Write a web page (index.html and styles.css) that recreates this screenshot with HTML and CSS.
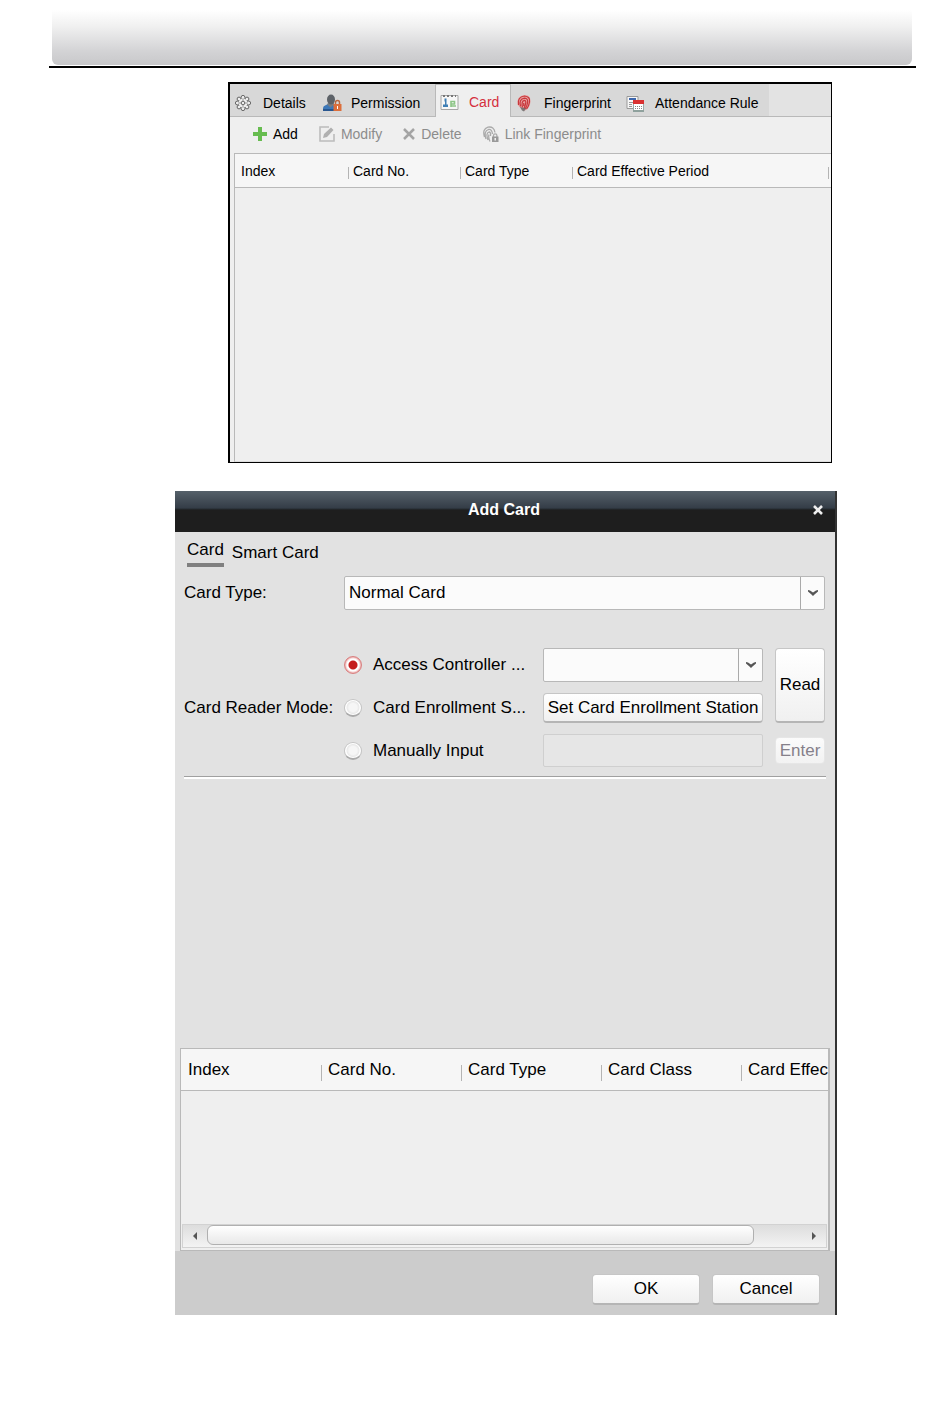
FILE: index.html
```html
<!DOCTYPE html>
<html lang="en">
<head>
<meta charset="utf-8">
<title>Add Card</title>
<link rel="stylesheet" href="styles.css">
</head>
<body>
<header class="page-header"><div class="banner"></div></header>
<main>
<section class="person-panel">
  <nav class="tabs" aria-label="Person">
    <div class="tab-list">
      <button class="tab tab-details" type="button">
        <svg class="icon" width="18" height="18" viewBox="0 0 18 18" fill="#eee" stroke="#666"><circle cx="9" cy="3.300" r="1.900"/><circle cx="13" cy="5" r="1.900"/><circle cx="14.700" cy="9" r="1.900"/><circle cx="13" cy="13" r="1.900"/><circle cx="9" cy="14.700" r="1.900"/><circle cx="5" cy="13" r="1.900"/><circle cx="3.300" cy="9" r="1.900"/><circle cx="5" cy="5" r="1.900"/><circle cx="9" cy="9" r="4.500" stroke="none"/><circle cx="9" cy="9" r="1.800"/><path d="M9 5v2M9 11v2M5 9h2M11 9h2" stroke="#999"/></svg>
        <span>Details</span></button>
      <button class="tab tab-permission" type="button">
        <svg class="icon" width="20" height="18" viewBox="0 0 20 18"><path d="M1 17v-3q0-2 3-3l2-1h6l2 2v5z" fill="#3e78b8"/><path d="M5 10.500l3.500 3 3.500-3V9H6z" fill="#777d84"/><ellipse cx="9" cy="5.500" rx="4" ry="5" fill="#5d6268"/><path d="M1 15h11v2H1z" fill="#28568f"/><path d="M13.500 11V8.500a2 2 0 0 1 4 0V11" fill="none" stroke="#b9673f" stroke-width="1.500"/><path d="M11.500 10h8v7h-8z" fill="#dc6e3b"/><path d="M15 12h1v3h-1z" fill="#fff"/></svg>
        <span>Permission</span></button>
      <button class="tab tab-card active" type="button">
        <svg class="icon" width="19" height="17" viewBox="0 0 19 17"><path d="M1 1.500h17v14H1z" fill="#f7f7f7" stroke="#a6a6a6"/><path d="M3 2h2m2 0h2m2 0h2m2 0h1" stroke="#777" stroke-width="2"/><path d="M4.500 4.500h2v3h-2zM5 7h1.500v3.500H8V13H3v-2.500h2z" fill="#3f7fb5"/><path d="M11 13V7.500h3.500V10H11m0 2h5" stroke="#8cc586" stroke-width="1.600" fill="none"/></svg>
        <span>Card</span></button>
      <button class="tab tab-finger" type="button">
        <svg class="icon" width="14" height="18" viewBox="0 0 14 18"><path d="M8 1c4 0 5.500 3 5.500 6 0 5-3 9-6 9.500-2 0-3-2-5-3.500S.5 10 .5 8C.5 4 4 1 8 1z" fill="#e8a3a3"/><g fill="none" stroke="#c8383c" stroke-width="1.200"><path d="M1.500 11Q0 3 7.500 2 13.500 2.500 12.500 8q-.5 4-3 7M3.500 12.500Q1.500 5 7.500 4.200 11.500 4.500 10.500 9q-.5 3.500-2.500 6M5.500 13.500Q4 7 7.500 6.400 9.500 7 8.500 10q-.5 2-1.500 4.500M6.700 9v3"/></g><path d="M3 13l6 1.500L7 17.500l-2-1z" fill="#666" opacity=".8"/></svg>
        <span>Fingerprint</span></button>
      <button class="tab tab-rule" type="button">
        <svg class="icon" width="18" height="17" viewBox="0 0 18 17"><path d="M1 1.500h11v12H1z" fill="#f6f6f6" stroke="#999"/><path d="M3 4h7" stroke="#3d66ad" stroke-width="2"/><path d="M3 7.500h4M3 9.500h3M3 11.500h3" stroke="#999"/><path d="M7.500 6.500h10v9h-10z" fill="#fff" stroke="#9aa"/><path d="M7 5h11v4H7z" fill="#d93131"/><path d="M9 11.500h7M9 13.500h7" stroke="#888" stroke-dasharray="1 1"/><path d="M7 15h11v2H7z" fill="#8fa19d"/></svg>
        <span>Attendance Rule</span></button>
    </div>
  </nav>
  <div class="toolbar">
    <button class="tool tool-add" type="button"><svg width="14" height="14" viewBox="0 0 14 14"><path d="M5 0h4v5h5v4H9v5H5V9H0V5h5z" fill="#67bc50"/></svg>Add</button>
    <button class="tool tool-modify" type="button" disabled><svg width="16" height="16" viewBox="0 0 16 16" fill="none" stroke="#bcbcbc" stroke-width="1.600"><path d="M10 1H1v14h14V8"/><path d="M4 12l1-4L12 1.500 14.500 4 8 11z" fill="#b0b0b0" stroke="none"/></svg>Modify</button>
    <button class="tool tool-delete" type="button" disabled><svg width="12" height="12" viewBox="0 0 12 12"><path d="M1 1l10 10M11 1L1 11" stroke="#a4a4a4" stroke-width="2.500"/></svg>Delete</button>
    <button class="tool tool-link" type="button" disabled><svg width="16" height="17" viewBox="0 0 16 17" fill="none" stroke="#aaa" stroke-width="1.300"><path d="M1.500 11Q-1 3 5 1.200 11 0 12 6.500M3 13Q.5 5 5.500 3.500 9 3 9.500 8M5 14Q2.500 7 6 6q2 0 1.500 4M7 15.500q-2-4-1-7"/><path d="M10.500 11V9.500a1.700 1.700 0 0 1 3.400 0V11"/><path d="M9 10.500h6.500V16H9z" fill="#999" stroke="none"/><path d="M12.200 12v2.500" stroke="#fff"/></svg>Link Fingerprint</button>
  </div>
  <table class="list list-small">
    <thead><tr><th class="col-first">Index</th><th class="col">Card No.</th><th class="col">Card Type</th><th>Card Effective Period</th><th class="col-end"></th></tr></thead>
  </table>
</section>

<section class="dialog" role="dialog" aria-labelledby="dialog-title">
  <div class="title-bar">
    <h1 id="dialog-title">Add Card</h1>
    <button class="close" type="button" aria-label="Close"><svg width="10" height="10" viewBox="0 0 10 10"><path d="M1 1l8 8M9 1L1 9" stroke="#eee" stroke-width="2.600"/></svg></button>
  </div>
  <div class="dialog-body">
    <nav class="modes" aria-label="Card kind"><a class="mode current" href="#card">Card</a><a class="mode" href="#smart">Smart Card</a></nav>
    <div class="type-row">
      <label for="card-type">Card Type:</label>
      <div class="select"><select id="card-type"><option>Normal Card</option></select><svg class="arrow" width="10" height="8" viewBox="0 0 10 8"><path d="M0 1l2 .5 3 2 3-2 2-.5v1.500L6.500 5.500 5 7 3.500 5.500 0 2.500z" fill="#555"/></svg></div>
    </div>
    <div class="reader" role="radiogroup" aria-labelledby="reader-label">
      <span class="reader-label" id="reader-label">Card Reader Mode:</span>
      <label class="choice"><input type="radio" name="reader" checked>Access Controller ...</label>
      <div class="select"><select aria-label="Access controller reader"><option></option></select><svg class="arrow" width="10" height="8" viewBox="0 0 10 8"><path d="M0 1l2 .5 3 2 3-2 2-.5v1.500L6.500 5.500 5 7 3.500 5.500 0 2.500z" fill="#555"/></svg></div>
      <button class="btn read" type="button">Read</button>
      <label class="choice"><input type="radio" name="reader">Card Enrollment S...</label>
      <button class="btn" type="button">Set Card Enrollment Station</button>
      <label class="choice"><input type="radio" name="reader">Manually Input</label>
      <input class="manual" type="text" aria-label="Card number" disabled>
      <button class="btn enter" type="button" disabled>Enter</button>
    </div>
    <hr class="divider">
  </div>
  <div class="card-list">
    <table class="list list-large">
      <thead><tr><th>Index</th><th>Card No.</th><th>Card Type</th><th>Card Class</th><th class="col-last">Card Effec</th></tr></thead>
    </table>
    <div class="scrollbar">
      <button class="step" type="button" aria-label="Scroll left"><svg width="4" height="8" viewBox="0 0 4 8"><path d="M4 0v8L0 4z" fill="#555"/></svg></button>
      <div class="track"><div class="thumb"></div></div>
      <button class="step" type="button" aria-label="Scroll right"><svg width="4" height="8" viewBox="0 0 4 8"><path d="M0 0v8l4-4z" fill="#555"/></svg></button>
    </div>
  </div>
  <footer class="actions"><button class="btn action" type="button">OK</button><button class="btn action" type="button">Cancel</button></footer>
</section>
</main>
</body>
</html>
```

FILE: styles.css
```css
* { box-sizing: border-box; }
body {
  margin: 0;
  background: #fff;
  color: #000;
  font: 17px/20px "Liberation Sans", Arial, sans-serif;
}
button, input, select { font: inherit; color: inherit; margin: 0; padding: 0; border: 0; background: none; border-radius: 0; }
svg { display: block; flex: none; }

.page-header { margin: 0 34px 0 49px; padding: 10px 0 1px; border-bottom: 2px solid #000; }
.banner { height: 55px; margin: 0 4px 0 3px; border-radius: 0 0 6px 6px; background: linear-gradient(#fff, #f0f0f0 30%, #d3d3d5 75%, #c8c8ca); }

.person-panel {
  display: flex;
  flex-direction: column;
  min-height: 381px;
  margin: 14px 118px 0 228px;
  border: 2px solid #000;
  border-right-width: 1px;
  border-bottom-width: 1px;
  background: #efefef;
  font-size: 14px;
  line-height: 16px;
}
.tabs { background: #e3e3e3; border-bottom: 1px solid #b9b9b9; }
.tab-list { display: inline-flex; vertical-align: top; height: 32px; background: #d8d8d8; padding-right: 10px; }
.tab { display: flex; align-items: center; padding: 6px 0 0 4px; height: 32px; white-space: nowrap; }
.tab-details { width: 87px; gap: 11px; }
.tab-permission { width: 118px; padding-left: 5px; gap: 9px; }
.tab-card { width: 76px; gap: 10px; padding-left: 4px; }
.tab-finger { width: 109px; padding-left: 6px; gap: 13px; }
.tab-rule { padding-left: 6px; gap: 11px; }
.active { height: 33px; padding-top: 2px; border: 1px solid #b9b9b9; border-bottom: 0; background: #efefef; color: #d5303e; }
.toolbar { display: flex; align-items: center; gap: 21px; height: 36px; padding: 0 0 2px 23px; }
.tool { display: flex; align-items: center; gap: 6px; white-space: nowrap; }
.tool:disabled { color: #8c8c8c; }

.list { width: 100%; border-collapse: separate; border-spacing: 0; table-layout: fixed; }
.list th {
  font-weight: normal;
  text-align: left;
  white-space: nowrap;
  background: linear-gradient(#b4b4b4, #b4b4b4) no-repeat #f6f6f6;
  border-bottom: 1px solid #b9b9b9;
}
.list th:first-child { background-image: none; }
.list-small { width: auto; margin-left: 4px; flex: 1; border: 1px solid #b9b9b9; border-bottom-color: #ddd; border-right: 0; display: block; }
.list-small thead { display: block; }
.list-small tr { display: flex; }
.list-small th { flex: 1; height: 34px; padding: 9px 0 0 5px; background-size: 1px 12px; background-position: 0 13px; }
.list-small .col-first { flex: 0 0 113px; padding-left: 6px; }
.list-small .col { flex: 0 0 112px; }
.list-small .col-end { flex: 0 0 3px; padding: 0; }

.dialog { margin: 28px 113px 0 175px; background: #e2e2e2; border-right: 2px solid #333; }
.title-bar {
  display: flex;
  align-items: center;
  height: 41px;
  padding: 0 12px 4px 20px;
  background: linear-gradient(#56616a, #343d47 17px, #252c31 18px, #1e1e1e 19px, #1e1e1e);
  color: #fff;
}
.title-bar h1 { flex: 1; margin: 0; font-size: 16px; line-height: 20px; text-align: center; }
.close { padding: 0; }
.dialog-body { padding: 8px 9px 0 9px; }
.modes { display: flex; gap: 8px; padding-left: 3px; height: 36px; }
.mode { color: #000; text-decoration: none; padding-top: 3px; }
.current { padding: 0; height: 27px; border-bottom: 4px solid #808080; }
.type-row { display: grid; grid-template-columns: 160px 1fr; align-items: center; }
.select { position: relative; }
.select select {
  display: block;
  appearance: none;
  width: 100%;
  height: 34px;
  padding-left: 4px;
  border: 1px solid #b8b8b8;
  border-radius: 2px;
  background: linear-gradient(#aaa, #aaa) no-repeat right 23px top / 1px 100% #fbfbfb;
}
.arrow { position: absolute; right: 7px; top: 13px; pointer-events: none; }
.type-row .select { margin-right: 1px; }
.reader {
  display: grid;
  grid-template-columns: 160px 199px 1fr 50px;
  grid-template-rows: 34px 30px 33px;
  row-gap: 11px;
  align-items: center;
  margin: 38px 1px 0 0;
}
.reader-label { grid-area: 1 / 1 / 4 / 2; white-space: nowrap; }
.choice { grid-column: 2; display: flex; align-items: center; gap: 11px; white-space: nowrap; }
.choice input {
  appearance: none;
  width: 18px;
  height: 18px;
  border: 1px solid #c4c4c4;
  border-bottom: 2px solid #aaa;
  border-radius: 50%;
  background: radial-gradient(circle, #f6f6f6 4px, #e9e9e9 6px, #fff 7px);
}
.choice input:checked { border: 1px solid #d98080; background: radial-gradient(circle, #c51d1d 4px, #fff 5px, #fff 6px, #eba9a9 8px); }
.btn {
  height: 30px;
  border: 1px solid #c6c6c6;
  border-bottom: 2px solid #b5b5b5;
  border-radius: 4px;
  background: linear-gradient(#fff, #f0f0f0);
  white-space: nowrap;
}
.read { grid-area: 1 / 4 / 3 / 5; height: 75px; }
.reader .select, .reader .manual { grid-column: 3; }
.reader .btn, .reader .select, .reader .manual { margin-right: 12px; }
.reader .read, .reader .enter { margin-right: 0; }
.manual { height: 33px; width: auto; min-width: 0; border: 1px solid #cfcfcf; border-radius: 2px; background: #e6e6e6; }
.enter { height: 27px; border: 1px solid #e6e6e6; background: linear-gradient(#fbfbfb, #f2f2f2); color: #85808a; }
.divider { height: 3px; margin: 9px 0 0; border: 0; border-top: 1px solid #a0a0a0; background: #fff; }

.card-list {
  display: flex;
  flex-direction: column;
  justify-content: space-between;
  min-height: 203px;
  margin: 269px 5px 0;
  border: 1px solid #b9b9b9;
  border-right-width: 2px;
  background: #efefef;
  overflow: hidden;
}
.list-large th { width: 140px; height: 42px; padding: 0 0 0 7px; background-size: 1px 16px; background-position: 0 16px; }
.list-large .col-last { width: auto; }
.scrollbar { display: flex; height: 24px; margin: 0 1px 2px; border: 1px solid #d2d2d2; background: linear-gradient(#ddd, #f3f3f3); }
.step { flex: 0 0 24px; display: flex; align-items: center; justify-content: center; }
.track { flex: 1; }
.thumb { width: 92%; height: 20px; border: 1px solid #b0b0b0; border-radius: 6px; background: linear-gradient(#fff, #e8e8e8); }
.actions { display: flex; justify-content: flex-end; gap: 12px; padding: 23px 15px 10px; background: #ccc; }
.action { width: 108px; height: 31px; }
```
